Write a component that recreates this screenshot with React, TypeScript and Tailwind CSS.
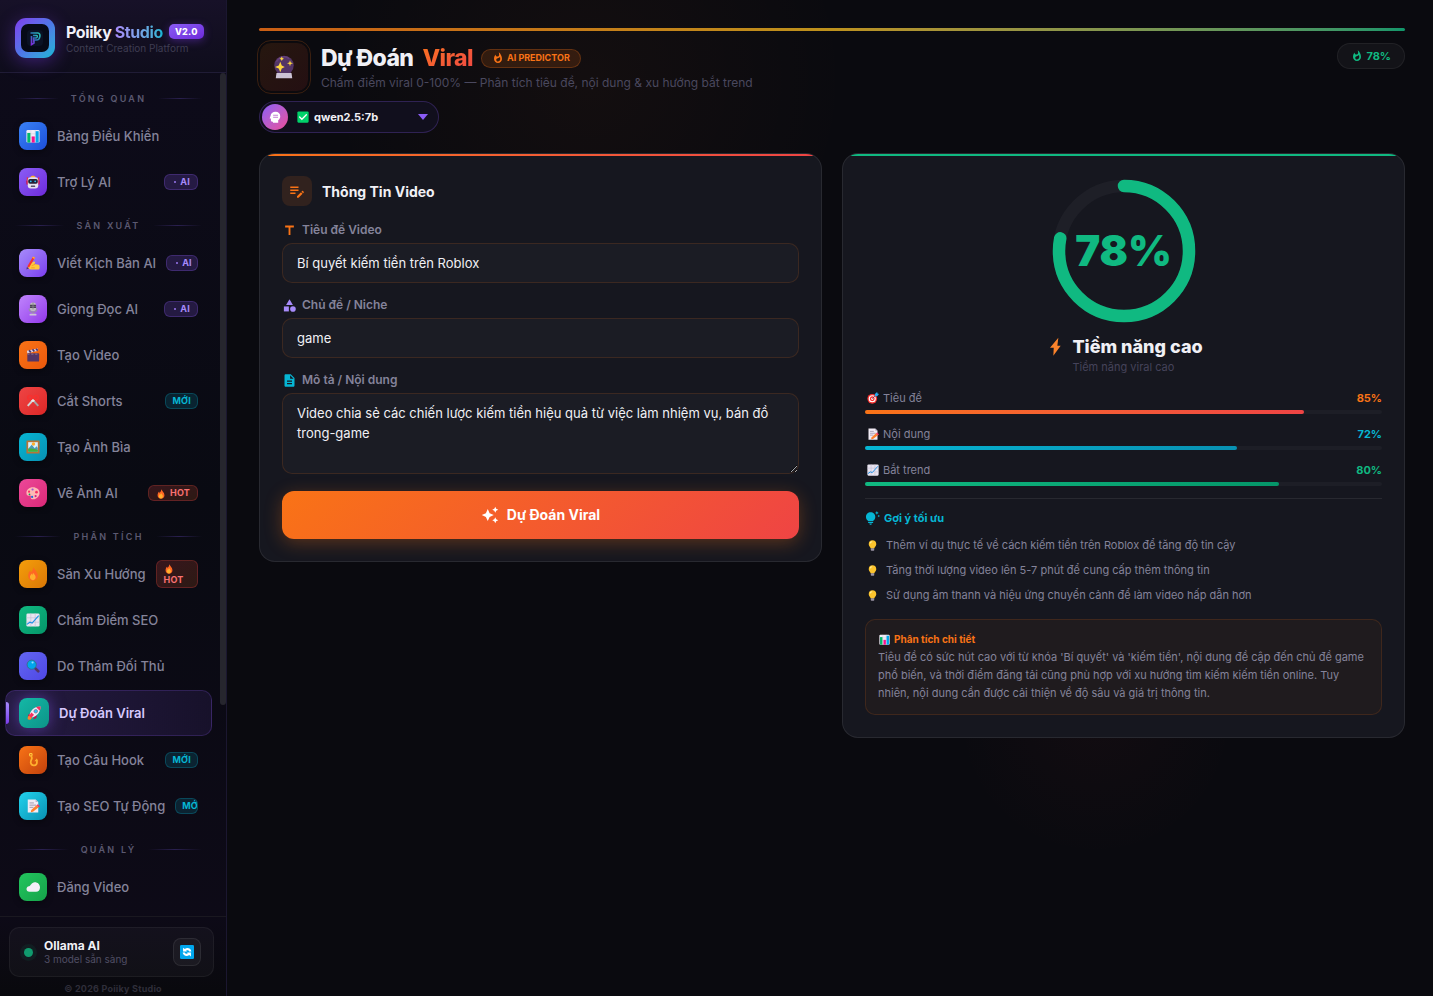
import React, { useState } from 'react';
import {
  MdAutoAwesome,
  MdCategory,
  MdDescription,
  MdEditNote,
  MdTipsAndUpdates,
  MdTitle,
  MdWhatshot,
} from 'react-icons/md';

type GlyphProps = { className?: string };

const glyphs = {
  chart: (
    <>
      <rect x="1" y="2" width="30" height="29" rx="3" fill="#f1eef8" />
      <path d="M1 11h30M1 20h30M11 2v29M21 2v29" stroke="#c9c3d8" strokeWidth="1" />
      <rect x="3" y="9" width="7" height="22" fill="#00b96b" />
      <rect x="13" y="17" width="7" height="14" fill="#f8128c" />
      <rect x="22" y="5" width="7" height="26" fill="#00a6ed" />
    </>
  ),
  robot: (
    <>
      <path d="M3 5v14M29 5v14" stroke="#f8312f" strokeWidth="2.5" />
      <path d="M10 6c0-6 12-6 12 0z" fill="#ffb02e" />
      <rect x="1" y="12" width="4" height="10" rx="2" fill="#ca0b4a" />
      <rect x="27" y="12" width="4" height="10" rx="2" fill="#ca0b4a" />
      <rect x="4" y="5" width="24" height="26" rx="7" fill="#e6e2ee" />
      <rect x="5" y="9" width="22" height="11" rx="4" fill="#251f35" />
      <circle cx="11" cy="14.500" r="2" fill="#26c9fc" />
      <circle cx="21" cy="14.500" r="2" fill="#26c9fc" />
      <rect x="11" y="24" width="10" height="3.500" rx="1" fill="#5b536b" />
    </>
  ),
  write: (
    <>
      <path d="M8 18l9-5c4-1 5 3 2 5l10 2c3 1 3 11 0 11H12c-5 0-8-4-7-7z" fill="#ffc83d" />
      <path d="M13 22l8-3M12 27h8" stroke="#f59a23" strokeWidth="2" />
      <path d="M5 25 18 3" stroke="#f8312f" strokeWidth="5" />
      <path d="m16 1 5 3-2 3-5-3z" fill="#ffb02e" />
      <path d="m2 25-1 6 6-3z" fill="#533566" />
    </>
  ),
  mic: (
    <>
      <rect x="9" y="1" width="14" height="20" rx="7" fill="#bebebe" />
      <path d="M9 8h14M9 12h14" stroke="#4b4456" strokeWidth="3" />
      <path d="M16 1v16" stroke="#8b8496" strokeWidth="2" />
      <path d="M7 15c0 11 18 11 18 0M16 23v5" stroke="#998ea4" strokeWidth="2.500" fill="none" />
      <rect x="8" y="27" width="16" height="4" rx="2" fill="#cdc4d6" />
    </>
  ),
  clapper: (
    <>
      <rect x="3" y="12" width="27" height="19" rx="2" fill="#533566" />
      <path d="m2 6 25-5 1 5L3 12z" fill="#d9d2e4" />
      <path d="m7 5 4 5M15 3l4 5M23 2l4 4" stroke="#533566" strokeWidth="4" />
      <path d="M3 14h27" stroke="#8b7a9c" strokeWidth="2" strokeDasharray="5 4" />
    </>
  ),
  scissors: (
    <>
      <circle cx="9" cy="8" r="5" fill="none" stroke="#f8312f" strokeWidth="3" />
      <circle cx="23" cy="8" r="5" fill="none" stroke="#f8312f" strokeWidth="3" />
      <path d="M4 27 16 14" stroke="#d3d3d3" strokeWidth="4.500" />
      <path d="M28 27 16 14" stroke="#a6a6a6" strokeWidth="4.500" />
      <path d="m13 17 3-3 3 3" stroke="#eee" strokeWidth="4" fill="none" />
    </>
  ),
  picture: (
    <>
      <rect x="1" y="1" width="30" height="30" rx="1" fill="#b87436" />
      <rect x="5" y="5" width="22" height="22" fill="#d9f3ff" />
      <circle cx="17" cy="9" r="4" fill="#ffb02e" />
      <path d="M5 20l8-9 7 8 4-5 3 4v9H5z" fill="#4e9bb5" />
      <path d="M5 27v-7c8-2 15 0 22 3v4z" fill="#44b33b" />
    </>
  ),
  palette: (
    <>
      <path d="M16 3C7 3 1 9 1 16c0 5 3 7 6 6 3-1 5 0 4 4-1 5 7 5 11 3 5-2 9-7 9-13C31 8 24 3 16 3z" fill="#ffb9b4" />
      <circle cx="24" cy="14" r="3" fill="#f92f60" />
      <circle cx="15" cy="8" r="2.500" fill="#9b51e0" />
      <circle cx="7" cy="13" r="2.500" fill="#f92f60" />
      <circle cx="8" cy="19" r="2" fill="#00a651" />
      <circle cx="22" cy="23" r="2.500" fill="#d71b8f" />
      <circle cx="14" cy="25" r="2.500" fill="#1c6ad6" />
    </>
  ),
  fire: (
    <>
      <path d="M17 0c1 6 10 10 10 20 0 7-5 11-11 11S5 27 5 20c0-5 2-9 5-12l1 5c3-3 6-7 6-13z" fill="#ff6723" />
      <path d="M16 13c2 4 6 5 6 10 0 5-3 7-6 7s-7-2-7-7c0-4 3-5 4-8l2 3z" fill="#ffb02e" />
    </>
  ),
  trend: (
    <>
      <rect x="1" y="1" width="30" height="30" rx="3" fill="#e9e5f1" />
      <path d="M1 11h30M1 21h30M11 1v30M21 1v30" stroke="#c4bdd2" strokeWidth="1.500" />
      <path d="m2 26 7-5 5 2 15-17" stroke="#1e91e8" strokeWidth="2.500" fill="none" />
    </>
  ),
  search: (
    <>
      <path d="m19 19 9 9" stroke="#533566" strokeWidth="6" strokeLinecap="round" />
      <circle cx="13" cy="13" r="10.500" fill="#00a6ed" stroke="#35707e" strokeWidth="2" />
      <circle cx="15" cy="8" r="2.500" fill="#8fe0ff" />
    </>
  ),
  rocket: (
    <>
      <path d="M8 16 3 20l-1 6 7-3zM17 24l-3 6 7-2 2-7z" fill="#ca0b4a" />
      <path d="M7 21c-6 1-6 7-5 10 4 1 9 0 9-5z" fill="#ff822d" />
      <path d="M6 20C8 9 18 1 31 1c0 12-8 22-19 25z" fill="#efe9f5" />
      <path d="M21 3c3-2 7-2 10-2 0 3 0 7-2 10z" fill="#f92f60" />
      <path d="m5 22 5-7 6 5-6 7z" fill="#f92f60" />
      <circle cx="20" cy="12" r="4" fill="#26c9fc" stroke="#83769c" strokeWidth="2" />
    </>
  ),
  hook: (
    <>
      <circle cx="11" cy="4" r="3" fill="none" stroke="#ffc83d" strokeWidth="2.500" />
      <path d="M11 7c7 5-2 9 0 16 2 8 14 7 14-2v-6" fill="none" stroke="#ffb02e" strokeWidth="4" />
      <path d="m25 12-6 7h6z" fill="#ffb02e" />
    </>
  ),
  memo: (
    <>
      <path d="M4 1h18l6 6v24H4z" fill="#f1ecf5" />
      <path d="M22 1v6h6z" fill="#bcb3c8" />
      <path d="M8 9h10M8 14h15M8 19h9" stroke="#998ea4" strokeWidth="2" />
      <path d="m12 25 12-11 5 5-13 10-5 1z" fill="#ff822d" />
      <path d="m24 14 3-2 5 5-3 2z" fill="#f92f60" />
    </>
  ),
  cloud: <path d="M8 27c-9 0-9-12-1-13 4-1 5-8 13-9 7 0 12 5 12 12 0 6-4 10-9 10z" fill="#f3eff8" />,
  crystal: (
    <>
      <circle cx="16" cy="14" r="13" fill="#533566" />
      <path d="M6 9c3-6 11-9 17-4" stroke="#643f7a" strokeWidth="2" fill="none" />
      <path d="M6 24h20l1 7H5z" fill="#cdc4d6" />
      <path d="m11 9 2 5 4 2-4 2-2 5-2-5-5-2 5-2zM24 7l1 3 3 1-3 1-1 3-1-3-3-1 3-1zM13 2l1 2 2 1-2 1-1 2-1-2-2-1 2-1z" fill="#fcd53f" />
    </>
  ),
  target: (
    <>
      <circle cx="14" cy="18" r="13" fill="#f8312f" />
      <circle cx="14" cy="18" r="9.500" fill="#fff" />
      <circle cx="14" cy="18" r="6.500" fill="#f8312f" />
      <circle cx="14" cy="18" r="3" fill="#fff" />
      <path d="M14 18 25 7" stroke="#533566" strokeWidth="2" />
      <path d="M21 11V5l6-5 1 4 4 1-5 6z" fill="#26a9ed" />
    </>
  ),
  bulb: (
    <>
      <path d="M16 1C9 1 5 6 5 12c0 5 5 8 6 13h10c1-5 6-8 6-13 0-6-4-11-11-11z" fill="#fcc42d" />
      <path d="M9 10c1-3 3-5 6-5" stroke="#fff3a8" strokeWidth="3" fill="none" />
      <rect x="11" y="24" width="10" height="7" rx="2" fill="#9a94a5" />
    </>
  ),
  refresh: (
    <>
      <rect x="0" y="0" width="32" height="32" rx="3" fill="#00a6ed" />
      <path d="M7 15V6l4 3c5-4 14-2 15 6h-5c-1-3-4-4-7-2l2 2zM25 17v9l-4-3c-5 4-14 2-15-6h5c1 3 4 4 7 2l-2-2z" fill="#fff" />
    </>
  ),
  check: (
    <>
      <rect x="1" y="1" width="30" height="30" rx="3" fill="#00d26a" />
      <path d="m7 16 6 6L25 10" stroke="#fff" strokeWidth="3.500" fill="none" strokeLinecap="round" />
    </>
  ),
};

type GlyphName = keyof typeof glyphs;

function Glyph({ name, className = 'size-3.5' }: GlyphProps & { name: GlyphName }) {
  return (
    <svg viewBox="0 0 32 32" aria-hidden="true" className={`shrink-0 ${className}`}>
      {glyphs[name]}
    </svg>
  );
}

type BadgeKind = 'ai' | 'new' | 'hot';
type NavEntry = { label: string; glyph: GlyphName; tile: string; badge?: BadgeKind; active?: boolean };

const sections: { title: string; items: NavEntry[] }[] = [
  {
    title: 'TỔNG QUAN',
    items: [
      { label: 'Bảng Điều Khiển', glyph: 'chart', tile: 'from-[#3b82f6] to-[#1d4ed8]' },
      { label: 'Trợ Lý AI', glyph: 'robot', tile: 'from-[#8b5cf6] to-[#6d28d9]', badge: 'ai' },
    ],
  },
  {
    title: 'SẢN XUẤT',
    items: [
      { label: 'Viết Kịch Bản AI', glyph: 'write', tile: 'from-[#a78bfa] to-[#7c3aed]', badge: 'ai' },
      { label: 'Giọng Đọc AI', glyph: 'mic', tile: 'from-[#c084fc] to-[#9333ea]', badge: 'ai' },
      { label: 'Tạo Video', glyph: 'clapper', tile: 'from-[#f97316] to-[#ea580c]' },
      { label: 'Cắt Shorts', glyph: 'scissors', tile: 'from-[#ef4444] to-[#dc2626]', badge: 'new' },
      { label: 'Tạo Ảnh Bìa', glyph: 'picture', tile: 'from-[#06b6d4] to-[#0891b2]' },
      { label: 'Vẽ Ảnh AI', glyph: 'palette', tile: 'from-[#ec4899] to-[#db2777]', badge: 'hot' },
    ],
  },
  {
    title: 'PHÂN TÍCH',
    items: [
      { label: 'Săn Xu Hướng', glyph: 'fire', tile: 'from-[#f59e0b] to-[#d97706]', badge: 'hot' },
      { label: 'Chấm Điểm SEO', glyph: 'trend', tile: 'from-[#10b981] to-[#059669]' },
      { label: 'Do Thám Đối Thủ', glyph: 'search', tile: 'from-[#6366f1] to-[#4f46e5]' },
      { label: 'Dự Đoán Viral', glyph: 'rocket', tile: 'from-[#14b8a6] to-[#0d9488]', active: true },
      { label: 'Tạo Câu Hook', glyph: 'hook', tile: 'from-[#f97316] to-[#c2410c]', badge: 'new' },
      { label: 'Tạo SEO Tự Động', glyph: 'memo', tile: 'from-[#22d3ee] to-[#0891b2]', badge: 'new' },
    ],
  },
  {
    title: 'QUẢN LÝ',
    items: [{ label: 'Đăng Video', glyph: 'cloud', tile: 'from-[#22c55e] to-[#16a34a]' }],
  },
];

function NavBadge({ kind }: { kind: BadgeKind }) {
  const base = 'ml-auto overflow-hidden rounded-md border text-[9px] font-bold tracking-wide';
  if (kind === 'ai') {
    return (
      <span className={`${base} flex items-center gap-1 border-[#8b5cf6]/25 bg-[#8b5cf6]/20 px-[7px] leading-[14px] text-[#a78bfa]`}>
        <span className="ml-0.5 size-0.5 shrink-0 bg-[#7c5fc4]" />
        AI
      </span>
    );
  }
  if (kind === 'new') {
    return <span className={`${base} border-[#06b6d4]/25 bg-[#06b6d4]/15 px-1.5 leading-[14px] text-[#06b6d4]`}>MỚI</span>;
  }
  return (
    <span className={`${base} border-[#ef4444]/25 bg-linear-to-br from-[#ef4444]/20 to-[#f97316]/15 px-[7px] py-px leading-3 text-[#f87171]`}>
      <Glyph name="fire" className="mr-0.5 inline-block size-2.5 align-middle" /> HOT
    </span>
  );
}

function NavItem({ item }: { item: NavEntry }) {
  const shell = item.active
    ? 'border-[#8b5cf6]/20 bg-linear-to-r from-[#8b5cf6]/20 to-[#8b5cf6]/10 font-semibold text-[#d6c8fd]'
    : 'border-transparent font-medium text-[#84839a]';
  const tile = item.active ? 'size-[30px] shadow-[0_0_16px_rgba(139,92,246,0.5)]' : 'size-7 shadow-[0_2px_6px_rgba(0,0,0,0.4)]';
  return (
    <a
      href="#"
      aria-current={item.active ? 'page' : undefined}
      className={`relative mb-0.5 flex items-center gap-2.5 overflow-hidden rounded-[10px] border px-[13px] py-[7px] text-[13px] ${shell}`}
    >
      {item.active && <span className="absolute left-0 h-[22px] w-[3px] rounded-r bg-linear-to-b from-[#a78bfa] to-[#7c3aed]" />}
      <span className={`flex shrink-0 items-center justify-center rounded-lg bg-linear-to-br ${tile} ${item.tile}`}>
        <Glyph name={item.glyph} />
      </span>
      <span className="shrink-0 whitespace-nowrap pt-0.5">{item.label}</span>
      {item.badge && <NavBadge kind={item.badge} />}
    </a>
  );
}

function Logo() {
  return (
    <span className="flex size-10 shrink-0 items-center justify-center rounded-[11px] bg-linear-to-br from-[#7c3aed] via-[#4f75e8] to-[#06b6d4] shadow-[0_4px_18px_rgba(124,58,237,0.4)]">
      <svg viewBox="0 0 28 28" className="size-7" aria-hidden="true">
        <defs>
          <linearGradient id="mark" x1="0" y1="1" x2="1" y2="0">
            <stop offset="0" stopColor="#8b1fe0" />
            <stop offset="0.5" stopColor="#2c76b8" />
            <stop offset="1" stopColor="#25c4b4" />
          </linearGradient>
        </defs>
        <rect width="28" height="28" rx="7" fill="#060a17" />
        <rect x="6" y="6" width="16" height="16" rx="4" fill="#0a1224" />
        <path d="M9.500 9H17c3 0 2.500 7-1.500 7H13v3l-2.500 1.500V12" fill="none" stroke="url(#mark)" strokeWidth="1.600" />
        <path d="M12 11.500h3.500c1.500 0 1 2.500-.5 2.500H12.500v4" fill="none" stroke="url(#mark)" strokeWidth="1.300" />
      </svg>
    </span>
  );
}

function Sidebar() {
  return (
    <aside className="sticky top-0 flex h-screen w-[227px] shrink-0 flex-col overflow-hidden border-r border-[#1b1730] bg-linear-to-b from-[#0e0b1b] via-[#090a12] to-[#0e0a18]">
      <div className="flex h-[73px] shrink-0 items-center gap-[11px] border-b border-[#201c36] bg-linear-to-b from-[#171128] to-[#0f0d1c] pl-[15px] pt-[3px]">
        <Logo />
        <div>
          <div className="flex items-center gap-1.5">
            <span className="whitespace-nowrap text-base font-bold leading-5 tracking-tight text-[#f0f0f8]">
              Poiiky{' '}
              <span className="bg-linear-to-r from-[#a78bfa] to-[#06b6d4] bg-clip-text text-transparent">Studio</span>
            </span>
            <span className="rounded-[5px] bg-linear-to-br from-[#8b5cf6] to-[#6d28d9] px-1.5 text-[9px] font-extrabold leading-[15px] tracking-wide text-white shadow-[0_2px_8px_rgba(124,58,237,0.4)]">
              V2.0
            </span>
          </div>
          <div className="whitespace-nowrap text-[10px] leading-3 text-[#3f3d52]">Content Creation Platform</div>
        </div>
      </div>

      <div className="relative min-h-0 flex-1">
        <nav className="h-full overflow-hidden pl-[5px] pr-3.5 pt-1.5">
          {sections.map((section) => (
            <section key={section.title}>
              <h2 className="flex h-[35px] items-center gap-3 px-2.5 pt-1 text-[9px] font-semibold tracking-[0.25em] text-[#5b5971]">
                <span className="h-px flex-1 bg-linear-to-r from-transparent via-[#2a2050] to-transparent" />
                {section.title}
                <span className="h-px flex-1 bg-linear-to-r from-transparent via-[#2a2050] to-transparent" />
              </h2>
              {section.items.map((item) => (
                <NavItem key={item.label} item={item} />
              ))}
            </section>
          ))}
        </nav>
        <span className="absolute right-0 top-0 h-3/4 w-1.5 rounded-full bg-[#26262e]" />
      </div>

      <div className="flex h-20 shrink-0 flex-col border-t border-[#1a1820] bg-linear-to-b from-[#0d0a17] to-[#09090d] px-[9px] pt-2.5">
        <div className="mr-[3px] flex h-[50px] shrink-0 items-center rounded-[10px] border border-white/5 bg-white/3 px-3">
          <span className="mx-0.5 size-[9px] rounded-full bg-[#109b6e] shadow-[0_0_0_4px_rgba(16,185,129,0.08)]" />
          <div className="ml-[9px] flex-1">
            <div className="text-xs font-bold leading-[14px] text-[#f0f0f5]">Ollama AI</div>
            <div className="text-[10px] leading-3 text-[#504e64]">3 model sẵn sàng</div>
          </div>
          <button aria-label="Làm mới" className="flex size-7 items-center justify-center rounded-lg border border-white/8 bg-white/4">
            <Glyph name="refresh" />
          </button>
        </div>
        <div className="mt-1.5 text-center text-[9px] font-bold leading-3 tracking-wide text-[#2f2e3a]">© 2026 Poiiky Studio</div>
      </div>
    </aside>
  );
}

function PageHeader() {
  return (
    <header>
      <div className="h-[3px] rounded-sm bg-linear-to-r from-[#f97316] via-[#eab320] to-[#10b981] opacity-80" />
      <div className="mt-[11px] flex items-start gap-3">
        <div className="flex size-[50px] shrink-0 items-center justify-center rounded-xl border border-[#0d0a0d] bg-linear-to-br from-[#26170f] to-[#240f12] outline-1 outline-offset-1 outline-[#f97316]/20">
          <Glyph name="crystal" className="size-6" />
        </div>
        <div>
          <div className="flex items-center gap-2">
            <h1 className="flex gap-[9px] text-[23px] font-extrabold leading-8 tracking-tight text-[#f0f0f5]">
              Dự Đoán
              <span className="bg-linear-to-br from-[#f97316] to-[#ef4444] bg-clip-text text-transparent">Viral</span>
            </h1>
            <span className="flex h-[19px] items-center gap-[3px] rounded-full border border-[#f97316]/25 bg-[#f97316]/15 px-2.5 text-[9px] font-bold text-[#f97316]">
              <MdWhatshot className="size-3" />
              AI PREDICTOR
            </span>
          </div>
          <p className="text-xs leading-[18px] text-[#4a485e]">
            Chấm điểm viral 0-100% — Phân tích tiêu đề, nội dung &amp; xu hướng bắt trend
          </p>
        </div>
        <div className="ml-auto mt-px flex h-[26px] items-center gap-[3px] rounded-full border border-white/6 bg-white/4 px-[13px] text-[11px] font-bold text-[#10b981]">
          <MdWhatshot className="size-3" />
          78%
        </div>
      </div>
      <div className="relative mt-[9px] flex h-8 w-[180px] items-center rounded-full border border-[#8b5cf6]/25 bg-[#110f1d] pl-0.5">
        <span className="flex size-[26px] shrink-0 items-center justify-center rounded-full bg-linear-to-br from-[#8b5cf6] to-[#ec4899]">
          <svg viewBox="0 0 24 24" className="size-3.5" aria-hidden="true">
            <path d="M13 3c-5 0-8.500 3-8.500 7L3 13.500c-.3.600.1 1 .8 1H5V18c0 1.200.8 2 2 2h1.500v2h9v-4.500c2-1.500 3.500-4 3.500-7C21 6 17.500 3 13 3z" fill="#fff" />
            <path d="M9.500 9h7M9.500 12.500h7" stroke="#b455c9" strokeWidth="1.300" strokeLinecap="round" />
          </svg>
        </span>
        <Glyph name="check" className="ml-[9px] size-3" />
        <select aria-label="Model" className="h-full min-w-0 flex-1 appearance-none bg-transparent pl-[5px] text-[11px] font-bold text-[#f0f0f5] outline-none">
          <option>qwen2.5:7b</option>
        </select>
        <svg viewBox="0 0 10 6" className="pointer-events-none absolute right-2.5 h-1.5 w-2.5" aria-hidden="true">
          <path d="M0 0h10L5 6z" fill="#8b5cf6" />
        </svg>
      </div>
    </header>
  );
}

const cardClass = 'relative overflow-hidden rounded-2xl border border-white/8 bg-[#16171f] p-[22px]';
const fieldClass =
  'mt-[3px] block w-full rounded-[10px] border border-[#f97316]/15 bg-[#1b1c24] px-3.5 text-[13px] text-[#f0f0f5] outline-none';
const labelClass = 'flex h-5 items-center gap-[5px] text-xs font-semibold text-[#84839a]';

function VideoForm() {
  const [title, setTitle] = useState('Bí quyết kiếm tiền trên Roblox');
  const [niche, setNiche] = useState('game');
  const [body, setBody] = useState(
    'Video chia sẻ các chiến lược kiếm tiền hiệu quả từ việc làm nhiệm vụ, bán đồ trong-game',
  );
  return (
    <section className={cardClass}>
      <span className="absolute inset-x-0 top-0 h-0.5 bg-linear-to-r from-[#f97316] to-[#ef4444]" />
      <div className="mb-3.5 flex items-center gap-2.5">
        <span className="flex size-[30px] items-center justify-center rounded-lg bg-[#f97316]/12 text-[#f97316]">
          <MdEditNote className="size-[18px]" />
        </span>
        <h2 className="pt-px text-sm font-bold text-[#f0f0f5]">Thông Tin Video</h2>
      </div>
      <form onSubmit={(e) => e.preventDefault()}>
        <div className="mb-3">
          <label htmlFor="title" className={labelClass}>
            <MdTitle className="size-[15px] text-[#f97316]" />
            Tiêu đề Video
          </label>
          <input id="title" value={title} onChange={(e) => setTitle(e.target.value)} className={`${fieldClass} h-10`} />
        </div>
        <div className="mb-3">
          <label htmlFor="niche" className={labelClass}>
            <MdCategory className="size-[15px] text-[#a78bfa]" />
            Chủ đề / Niche
          </label>
          <input id="niche" value={niche} onChange={(e) => setNiche(e.target.value)} className={`${fieldClass} h-10`} />
        </div>
        <div className="mb-[17px]">
          <label htmlFor="body" className={labelClass}>
            <MdDescription className="size-[15px] text-[#06b6d4]" />
            Mô tả / Nội dung
          </label>
          <textarea
            id="body"
            value={body}
            onChange={(e) => setBody(e.target.value)}
            className={`${fieldClass} h-[81px] resize-y py-[9px] leading-5`}
          />
        </div>
        <button
          type="submit"
          className="flex h-12 w-full items-center justify-center gap-2 rounded-xl bg-[linear-gradient(135deg,#f97316,#ef4444)] text-sm font-bold text-white shadow-[0_4px_18px_rgba(249,115,22,0.3)]"
        >
          <MdAutoAwesome className="size-[18px]" />
          Dự Đoán Viral
        </button>
      </form>
    </section>
  );
}

const metrics: { label: string; glyph: GlyphName; value: number; text: string; bar: string }[] = [
  { label: 'Tiêu đề', glyph: 'target', value: 85, text: 'text-[#f97316]', bar: 'from-[#f97316] to-[#ef4444]' },
  { label: 'Nội dung', glyph: 'memo', value: 72, text: 'text-[#06b6d4]', bar: 'from-[#06b6d4] to-[#0891b2]' },
  { label: 'Bắt trend', glyph: 'trend', value: 80, text: 'text-[#10b981]', bar: 'from-[#10b981] to-[#059669]' },
];

const tips = [
  'Thêm ví dụ thực tế về cách kiếm tiền trên Roblox để tăng độ tin cậy',
  'Tăng thời lượng video lên 5-7 phút để cung cấp thêm thông tin',
  'Sử dụng âm thanh và hiệu ứng chuyển cảnh để làm video hấp dẫn hơn',
];

function ScoreRing({ score }: { score: number }) {
  const length = 2 * Math.PI * 52;
  return (
    <div className="mx-auto grid size-[150px] place-items-center">
      <svg viewBox="0 0 120 120" className="col-start-1 row-start-1 size-full -rotate-90" aria-hidden="true">
        <circle cx="60" cy="60" r="52" fill="none" stroke="#1e1f27" strokeWidth="10" />
        <circle
          cx="60"
          cy="60"
          r="52"
          fill="none"
          stroke="#10b981"
          strokeWidth="10"
          strokeLinecap="round"
          strokeDasharray={`${(length * score) / 100} ${length}`}
        />
      </svg>
      <span className="col-start-1 row-start-1 text-[42px] font-black leading-none text-[#10b981]">{score}%</span>
    </div>
  );
}

function ResultCard() {
  return (
    <section className={cardClass}>
      <span className="absolute inset-x-0 top-0 h-0.5 bg-[#10b981]" />
      <ScoreRing score={78} />
      <div className="mt-2 flex justify-center gap-2">
        <svg viewBox="0 0 24 24" className="mt-[3px] size-5" aria-hidden="true">
          <path d="M17.200 1 7.200 13h4.500L11.200 22.500 20 10.500H16z" fill="#fb832b" />
        </svg>
        <div>
          <h2 className="text-lg font-extrabold leading-[25px] text-[#f0f0f5]">Tiềm năng cao</h2>
          <p className="text-[11px] leading-4 text-[#45435a]">Tiềm năng viral cao</p>
        </div>
      </div>

      <div className="mt-3.5 flex flex-col gap-[11px]">
        {metrics.map((m) => (
          <div key={m.label}>
            <div className="flex h-[18px] items-center text-[11px] leading-[18px]">
              <Glyph name={m.glyph} className="ml-0.5 mr-1 size-3" />
              <span className="text-[#84839a]">{m.label}</span>
              <span className={`ml-auto font-bold ${m.text}`}>{m.value}%</span>
            </div>
            <div className="mt-[3px] h-1 rounded-full bg-[#1d1e26]">
              <div className={`h-full rounded-full bg-linear-to-r ${m.bar}`} style={{ width: `${m.value}%` }} />
            </div>
          </div>
        ))}
      </div>

      <div className="mt-3 border-t border-white/8 pt-2.5">
        <h3 className="flex h-[18px] items-center gap-1 text-[11px] font-bold text-[#06b6d4]">
          <MdTipsAndUpdates className="size-[15px]" />
          Gợi ý tối ưu
        </h3>
        <ul className="mt-1.5 text-[11px] leading-[17px] text-[#84839a]">
          {tips.map((tip) => (
            <li key={tip} className="flex items-center gap-2 py-1">
              <Glyph name="bulb" className="ml-0.5 size-[11px]" />
              {tip}
            </li>
          ))}
        </ul>
      </div>

      <div className="mt-[11px] rounded-[10px] border border-[#f97316]/15 bg-[#f97316]/4 px-3 pb-3 pt-[11px]">
        <h3 className="flex h-4 items-center gap-1 text-[10px] font-bold text-[#f97316]">
          <Glyph name="chart" className="ml-px size-[11px]" />
          Phân tích chi tiết
        </h3>
        <p className="mt-px text-[11px] leading-[18px] text-[#84839a]">
          Tiêu đề có sức hút cao với từ khóa 'Bí quyết' và 'kiếm tiền', nội dung đề cập đến chủ đề game phổ biến, và thời
          điểm đăng tải cũng phù hợp với xu hướng tìm kiếm kiếm tiền online. Tuy nhiên, nội dung cần được cải thiện về độ
          sâu và giá trị thông tin.
        </p>
      </div>
    </section>
  );
}

export default function App() {
  return (
    <div className="flex min-h-screen bg-[#0a0a0f] font-['Inter',sans-serif]">
      <Sidebar />
      <main className="min-w-0 flex-1 bg-[radial-gradient(circle_at_30%_8%,rgba(249,115,22,0.04),transparent_260px),radial-gradient(circle_at_72%_72%,rgba(239,68,68,0.035),transparent_140px)] pb-8 pl-8 pr-7 pt-7">
        <PageHeader />
        <div className="mt-5 grid grid-cols-2 items-start gap-5">
          <VideoForm />
          <ResultCard />
        </div>
      </main>
    </div>
  );
}
